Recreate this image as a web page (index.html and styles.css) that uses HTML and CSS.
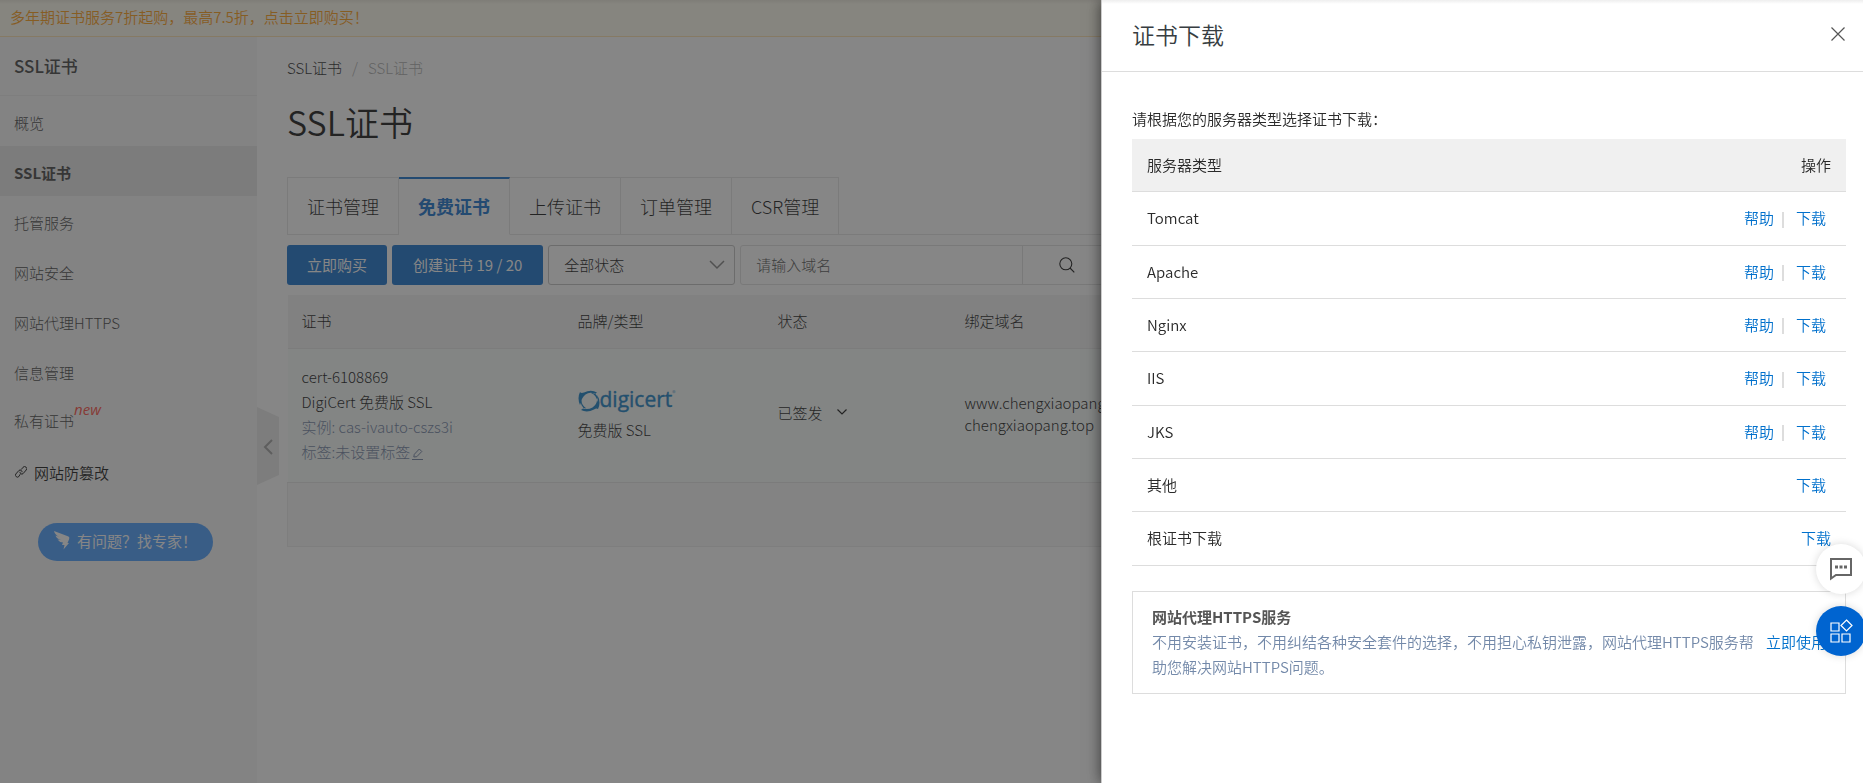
FILE: index.html
```html
<!DOCTYPE html>
<html lang="zh-CN">
<head>
<meta charset="utf-8">
<title>SSL证书</title>
<link rel="stylesheet" href="styles.css">
</head>
<body>
<div class="page">
  <a class="banner" href="#">多年期证书服务7折起购，最高7.5折，点击立即购买！</a>
  <div class="body">
    <aside class="sidebar">
      <h2 class="sidebar-title">SSL证书</h2>
      <nav class="menu">
        <a class="menu-item" href="#">概览</a>
        <a class="menu-item active" href="#">SSL证书</a>
        <a class="menu-item" href="#">托管服务</a>
        <a class="menu-item" href="#">网站安全</a>
        <a class="menu-item" href="#">网站代理HTTPS</a>
        <a class="menu-item" href="#">信息管理</a>
        <a class="menu-item tagged" href="#">私有证书<em class="new">new</em></a>
        <a class="menu-item external" href="#">
          <svg width="12" height="12" viewBox="0 0 12 12" fill="none" stroke="currentColor" stroke-width="1"><path d="M5.200 8.200 3.900 10.500A2 2 0 0 1 .8 8L4 4.400A1.900 1.900 0 0 1 7 6.200M6.300 3.500 8 1.300A1.900 1.900 0 0 1 11.200 4L8 7.700A1.900 1.900 0 0 1 5 5.800"/></svg>
          网站防篡改
        </a>
      </nav>
      <button class="expert" type="button">
        <svg width="16" height="19" viewBox="0 0 16 19" fill="currentColor"><path d="M0 0 14.500 5.500Q16 6.400 15 8.500L13.500 12H15L9.500 18.500 10.500 14H8L9 11.500Q5 11 3.500 8.500L7 9Q2.500 7.500 1.500 4.500L5.500 6Q1 4 0 0Z"/></svg>
        有问题？找专家！
      </button>
      <button class="handle" type="button" aria-label="收起">
        <svg width="22" height="78" viewBox="0 0 22 78"><path class="handle-bg" d="M0 0 22 10V68L0 78Z"/><path class="handle-arrow" d="M15 33 8 40 15 47"/></svg>
      </button>
    </aside>
    <main class="main">
      <nav class="crumbs"><a href="#">SSL证书</a><span class="slash">/</span><span class="current">SSL证书</span></nav>
      <h1 class="title">SSL证书</h1>
      <div class="tabs">
        <button class="tab" type="button">证书管理</button>
        <button class="tab selected" type="button">免费证书</button>
        <button class="tab" type="button">上传证书</button>
        <button class="tab" type="button">订单管理</button>
        <button class="tab" type="button">CSR管理</button>
      </div>
      <div class="toolbar">
        <button class="btn" type="button">立即购买</button>
        <button class="btn" type="button">创建证书 19 / 20</button>
        <div class="select">
          <select aria-label="状态"><option>全部状态</option></select>
          <svg width="16" height="10" viewBox="0 0 16 10" fill="none" stroke="currentColor" stroke-width="1.500"><path d="M1 1 8 8 15 1"/></svg>
        </div>
        <div class="search">
          <input type="text" placeholder="请输入域名" aria-label="域名">
          <button type="button" aria-label="搜索"><svg width="16" height="16" viewBox="0 0 16 16" fill="none" stroke="currentColor" stroke-width="1.100"><circle cx="6.800" cy="6.800" r="6"/><path d="M11 11 15.300 15.300"/></svg></button>
        </div>
      </div>
      <table class="certs">
        <colgroup><col class="c1"><col class="c2"><col class="c3"><col></colgroup>
        <thead><tr><th>证书</th><th>品牌/类型</th><th>状态</th><th>绑定域名</th></tr></thead>
        <tbody><tr>
          <td>
            <div>cert-6108869</div>
            <div>DigiCert 免费版 SSL</div>
            <div class="muted">实例: cas-ivauto-cszs3i</div>
            <div class="muted">标签:未设置标签<svg class="edit" width="12" height="12" viewBox="0 0 12 12" fill="none" stroke="currentColor"><path d="M0 11.500H11M1.800 9 2.300 6.300 7.300 1 9.800 3.500 4.800 8.700Z"/></svg></div>
          </td>
          <td>
            <div class="logo">
              <svg width="22" height="22" viewBox="0 0 22 22" fill="currentColor"><path d="M2 15Q-1 8 2 2Q3 3.500 6 2.500Q13-1 19 2.500L17 4Q12 1.500 7.500 4.500Q3.500 8 3.500 11Q3 13 2 15ZM19 4.500Q23.500 12 20 19Q18.500 18 16 19.500Q9 23 3 20L5 18.500Q10 20 14.500 17.500Q19 14 19 10Q20 7 19 4.500ZM3.500 9Q3 15 8.500 18.500L5.500 18Q1.500 14 3.500 9ZM13 3Q18.500 5 19.500 12Q21 6 16 3Z"/></svg>
              <span class="logo-text">digicert</span><sup class="reg">®</sup>
            </div>
            <div>免费版 SSL</div>
          </td>
          <td><span class="status">已签发<svg width="10" height="6" viewBox="0 0 10 6" fill="none" stroke="currentColor" stroke-width="1.200"><path d="M.5.500 5 5 9.500.500"/></svg></span></td>
          <td class="domains">www.chengxiaopang.top<br>chengxiaopang.top</td>
        </tr></tbody>
        <tfoot><tr><td colspan="4"></td></tr></tfoot>
      </table>
    </main>
  </div>
</div>
<div class="overlay"></div>
<section class="drawer" role="dialog" aria-labelledby="drawer-title">
  <header class="drawer-head">
    <h2 id="drawer-title">证书下载</h2>
    <button class="close" type="button" aria-label="关闭"><svg width="14" height="14" viewBox="0 0 14 14" stroke="currentColor" stroke-width="1.200"><path d="M.5.500 13.500 13.500M13.500.500.500 13.500"/></svg></button>
  </header>
  <div class="drawer-body">
    <p class="hint">请根据您的服务器类型选择证书下载：</p>
    <table class="servers">
      <thead><tr><th>服务器类型</th><th class="ops">操作</th></tr></thead>
      <tbody>
        <tr><td>Tomcat</td><td class="ops"><a href="#">帮助</a><i class="bar"></i><a class="dl" href="#">下载</a></td></tr>
        <tr><td>Apache</td><td class="ops"><a href="#">帮助</a><i class="bar"></i><a class="dl" href="#">下载</a></td></tr>
        <tr><td>Nginx</td><td class="ops"><a href="#">帮助</a><i class="bar"></i><a class="dl" href="#">下载</a></td></tr>
        <tr><td>IIS</td><td class="ops"><a href="#">帮助</a><i class="bar"></i><a class="dl" href="#">下载</a></td></tr>
        <tr><td>JKS</td><td class="ops"><a href="#">帮助</a><i class="bar"></i><a class="dl" href="#">下载</a></td></tr>
        <tr><td>其他</td><td class="ops"><a class="dl" href="#">下载</a></td></tr>
        <tr><td>根证书下载</td><td class="ops"><a href="#">下载</a></td></tr>
      </tbody>
    </table>
    <div class="promo">
      <div class="promo-text">
        <h3>网站代理HTTPS服务</h3>
        <p>不用安装证书，不用纠结各种安全套件的选择，不用担心私钥泄露，网站代理HTTPS服务帮助您解决网站HTTPS问题。</p>
      </div>
      <a href="#">立即使用</a>
    </div>
  </div>
</section>
<div class="floats">
  <button class="float" type="button" aria-label="咨询"><svg width="24" height="24" viewBox="0 0 24 24" fill="none" stroke="currentColor" stroke-width="2"><path d="M2 2H22V18H7L2 21.500Z"/><path stroke-width="3" d="M6 10H9M10.500 10H13.500M15 10H18"/></svg></button>
  <button class="float primary" type="button" aria-label="应用"><svg width="24" height="24" viewBox="0 0 24 24" fill="none" stroke="currentColor" stroke-width="1.200"><path d="M2 4H10V12H2ZM2 15H10V23H2ZM13 15H21V23H13ZM17.500 1 23 6.500 17.500 12 12 6.500Z"/></svg></button>
</div>
</body>
</html>
```
FILE: styles.css
```css
* { box-sizing: border-box; }
body, h1, h2, h3, p { margin: 0; }
body {
  font: 350 15px/25px "Noto Sans CJK SC", sans-serif;
  color: #2a2a2a;
  overflow: hidden;
}
button, input, select { font: inherit; color: inherit; border: 0; padding: 0; background: none; }
a { color: inherit; text-decoration: none; }
svg { display: block; }
table { border-collapse: collapse; width: 100%; }
th, td { text-align: left; font-weight: inherit; padding: 0; }

.page { min-height: 100vh; display: flex; flex-direction: column; background: #fff; }
.banner {
  height: 37px; padding: 4px 10px; color: #ff9500;
  background: linear-gradient(#ece8da, #fffbec 4px);
  border-bottom: 1px solid #ffe0a8;
}
.body { flex: 1; display: flex; }
.sidebar { position: relative; flex: 0 0 257px; background: #f7f7f7; color: #333; font-weight: 300; }
.sidebar-title { height: 59px; padding: 16px 14px; font-size: 17px; font-weight: 500; color: #333; border-bottom: 1px solid #eaeaea; }
.menu { display: flex; flex-direction: column; }
.menu-item { display: flex; align-items: center; height: 50px; padding: 2px 14px 0; }
.menu-item.active { background: #e4e4e4; color: #333; font-weight: 700; }
.menu-item.tagged { padding: 0 14px 2px; }
.new { color: #ff3b30; margin-bottom: 22px; font-family: "Open Sans", sans-serif; font-weight: 400; }
.external { color: #000; gap: 7px; padding-left: 15px; font-weight: 350; }
.expert {
  display: flex; align-items: center; justify-content: center; gap: 7px;
  width: 175px; height: 38px; margin: 27px 0 0 38px; padding-bottom: 3px; border-radius: 19px;
  background: #3a96ff; color: #fff; font-weight: 400;
}
.handle { position: absolute; left: 100%; top: 370px; }
.handle-bg { fill: #e8e8e8; }
.handle-arrow { fill: none; stroke: #999; stroke-width: 2; }

.main { flex: 1; min-width: 0; padding: 18px 24px 0 30px; color: #000; font-weight: 300; }
.crumbs { display: flex; gap: 10px; color: #111; }
.slash, .current { color: #a5a5a5; }
.title { margin-top: 16px; font-size: 34px; line-height: 52px; font-weight: 350; color: #000; }
.tabs { display: flex; margin-top: 29px; box-shadow: inset 0 -1px #e3e3e3; border-left: 1px solid #e3e3e3; }
.tab { height: 58px; padding: 0 19px; font-size: 18px; border: solid #e3e3e3; border-width: 1px 1px 1px 0; }
.tab.selected { color: #0064c8; font-weight: 700; background: #fff; border-top: 2px solid #0064c8; border-bottom-color: #fff; }
.toolbar { display: flex; gap: 5px; margin-top: 10px; }
.btn { height: 40px; padding: 0 20px 2px; border-radius: 3px; background: #0064c8; color: #fff; font-weight: 400; }
.btn + .btn { padding: 0 21px 2px; }
.select { position: relative; width: 187px; }
.select select { appearance: none; width: 100%; height: 40px; padding: 0 15px 2px; border: 1px solid #bbb; border-radius: 3px; }
.select svg { position: absolute; right: 10px; top: 15px; color: #777; pointer-events: none; }
.search { display: flex; width: 440px; height: 40px; border: 1px solid #ddd; border-radius: 3px; }
.search input { width: 282px; padding: 0 15px 2px; border-right: 1px solid #ddd; }
.search input::placeholder { color: #444; }
.search button { padding-left: 36px; }
.certs { margin-top: 10px; table-layout: fixed; }
.c1 { width: 276px; }
.c2 { width: 200px; }
.c3 { width: 187px; }
.certs th { height: 53px; padding: 0 0 2px 14px; background: #f3f3f3; border-bottom: 1px solid #e6e6e6; }
.certs tbody td { height: 134px; padding: 0 0 3px 14px; background: #f7fcfa; border-bottom: 1px solid #e3e3e3; }
.certs tfoot td { height: 64px; background: #f7f7f7; border: 1px solid #eaeaea; }
.muted { color: #66789c; }
.edit { display: inline-block; margin-left: 2px; vertical-align: -2px; }
.logo { display: flex; align-items: center; height: 31px; color: #0074c0; }
.logo-text { font: 400 21px/22px "Open Sans", sans-serif; -webkit-text-stroke: 0.4px; padding-bottom: 4px; }
.reg { font-size: 7px; line-height: 14px; align-self: flex-start; }
.status { display: flex; align-items: center; gap: 14px; padding-bottom: 3px; }
.certs .domains { line-height: 22px; }

.overlay { position: fixed; inset: 0; background: rgba(58, 58, 58, .61); }
.drawer {
  position: fixed; inset: 0 0 0 auto; width: 762px; max-width: 100%;
  background: #fff; border-left: 1px solid #ccc; overflow: auto;
  box-shadow: 0 0 14px rgba(0, 0, 0, .6);
}
.drawer-head {
  display: flex; justify-content: space-between; align-items: center;
  height: 72px; padding: 0 18px 4px 30px; border-bottom: 1px solid #ddd;
  background: linear-gradient(#eee, #fff 4px);
}
.drawer-head h2 { font-size: 23px; line-height: 34px; font-weight: 350; color: #373d41; }
.close { color: #555; }
.drawer-body { padding: 34px 17px 0 30px; }
.hint { margin-bottom: 8px; }
.servers th { height: 52px; background: #f0f0f0; }
.servers td { height: 53px; }
.servers tr:nth-child(3n + 1) td { height: 54px; }
.servers th, .servers td { padding: 0 15px 1px; border-bottom: 1px solid #ddd; }
.servers .ops { text-align: right; }
.drawer a { color: #0070cc; }
.bar { display: inline-block; width: 2px; height: 16px; margin: 0 12px 0 8px; background: #ddd; vertical-align: middle; }
.servers .dl { margin-right: 5px; }
.promo { display: flex; align-items: center; gap: 10px; margin-top: 25px; padding: 12px 19px 14px; border: 1px solid #ddd; }
.promo-text { flex: 1; }
.promo h3 { font-size: 15px; line-height: 25px; font-weight: 700; color: #555; }
.promo p { color: #7389a9; }
.floats { position: fixed; right: -3px; top: 544px; display: grid; gap: 12px; }
.float {
  display: grid; place-items: center; width: 50px; height: 50px; border-radius: 50%;
  background: #fff; color: #666; box-shadow: 0 0 8px rgba(0, 0, 0, .15);
}
.float.primary { background: #0064d0; color: #fff; }
```
